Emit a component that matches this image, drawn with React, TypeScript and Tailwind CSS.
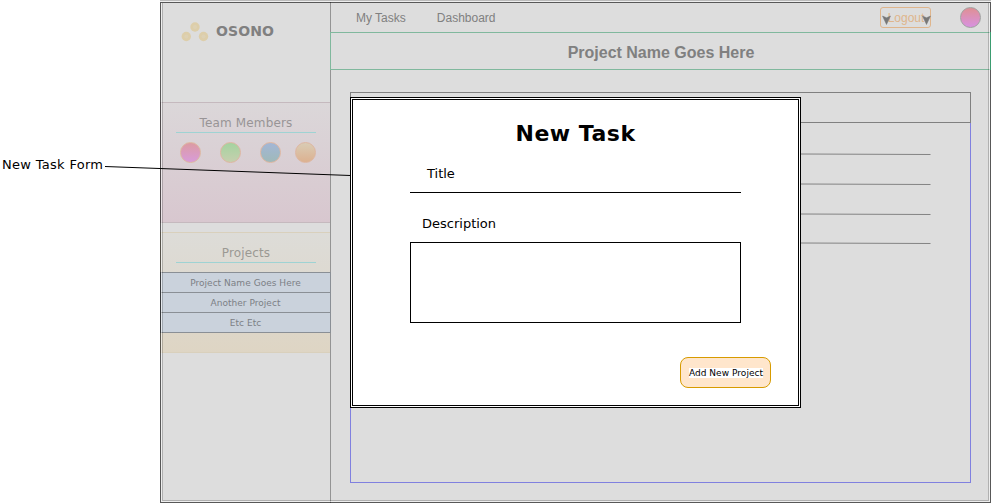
const verdana = "font-['DejaVu_Sans',sans-serif]";

const members = [
  { id: 'm1', fill: 'bg-linear-to-b from-[#dc9ba2] to-[#d89bd9]', gap: 'ml-[19px]' },
  { id: 'm2', fill: 'bg-linear-to-b from-[#a4d3a0] to-[#c6cfae]', gap: 'ml-[19px]' },
  { id: 'm3', fill: 'bg-linear-to-b from-[#a3b6d6] to-[#9fb9b9]', gap: 'ml-[19px]' },
  { id: 'm4', fill: 'bg-linear-to-b from-[#d9ccb5] to-[#dcb190]', gap: 'ml-[14px]' },
];

const projects = ['Project Name Goes Here', 'Another Project', 'Etc Etc'];

function Logo() {
  const dots = [
    [14, 5],
    [5.3, 14.5],
    [22.5, 14.5],
  ];
  return (
    <svg width="28" height="20" viewBox="0 0 28 20">
      {dots.map(([x, y]) => (
        <g key={x}>
          <circle cx={x} cy={y} r="4.7" fill="#ddceaa" />
          <circle cx={x} cy={y} r="2" fill="#ddd1b5" />
        </g>
      ))}
    </svg>
  );
}

function Sidebar() {
  return (
    <aside className={`flex h-[503px] w-[171px] shrink-0 flex-col border-r border-[#949494] pt-[3px] ${verdana}`}>
      <div className="flex h-[99px] items-start pl-[21px] pt-[19px]">
        <Logo />
        <span className="ml-[7px] text-[14px] leading-[18px] font-bold tracking-[0.1px] text-[#808080]">OSONO</span>
      </div>
      <section className="h-[121px] border-y border-l border-[#c5b9be] bg-linear-to-b from-[#dbd7d9] to-[#d8c7cf]">
        <h2 className="ml-[15px] mt-[12px] h-[18px] w-[140px] border-b border-[#9ed3d3] text-center text-[12px] leading-[17px] text-[#989496]">
          <span className="tracking-[0.15px]">Team Members</span>
        </h2>
        <div className="mt-[9px] flex">
          {members.map((m) => (
            <span key={m.id} className={`size-[21px] shrink-0 rounded-full border border-[#deb6a0] ${m.gap} ${m.fill}`} />
          ))}
        </div>
      </section>
      <section className="mt-[9px] h-[121px] border-y border-l border-[#d9d0bc] bg-linear-to-b from-[#dddcd8] to-[#ded5c4]">
        <h2 className="ml-[15px] mt-[12px] h-[18px] w-[140px] border-b border-[#9ed3d3] text-center text-[12px] leading-[17px] text-[#9b9993]">
          <span className="tracking-[0.15px]">Projects</span>
        </h2>
        <ul className="-mx-px mt-[9px] border-t border-[#8a8f95]">
          {projects.map((p) => (
            <li key={p} className="h-[20px] border-x border-b border-[#8a8f95] bg-[#cad2dc] text-center text-[9px] leading-[20px] tracking-[0.03px] text-[#7c8085]">
              {p}
            </li>
          ))}
        </ul>
      </section>
    </aside>
  );
}

function Nav() {
  return (
    <nav className="flex h-[33px] items-start border-b border-[#80b89d] pt-[7px] font-['Liberation_Sans',sans-serif] text-[12px] text-[#808080]">
      <a className="ml-[25px] mt-[3px] leading-[16px]">My Tasks</a>
      <a className="ml-[31px] mt-[3px] leading-[16px]">Dashboard</a>
      <div className="relative ml-auto h-[21px] w-[51px] rounded-[3px] border border-[#dfb58c] text-center leading-[20px] text-[#dfb58c]">
        <span className="ml-px">Logout</span>
        <svg className="absolute left-[1px] top-[7px]" width="50" height="11" viewBox="0 0 50 11">
          <path d="M0.5 1 L4.5 2.8 L8.5 1 L4.5 9.5 Z M40.5 1 L44.5 2.8 L48.5 1 L44.5 9.5 Z" fill="#777" stroke="#777" strokeWidth="0.5" />
        </svg>
      </div>
      <span className="ml-[29px] mr-[10px] size-[21px] rounded-full border border-[#a0a0a0] bg-linear-to-b from-[#df8f93] to-[#d891df]" />
    </nav>
  );
}

function TaskBoard() {
  return (
    <div className="ml-[19px] mt-[22px] w-[621px]">
      <div className="h-[31px] border border-[#808080]" />
      <div className="h-[360px] border border-t-0 border-[#8080df]">
        <svg width="619" height="140" viewBox="351 123 619 140" fill="none" stroke="#838383" strokeWidth="1">
          {[154.5, 184.5, 214.5, 243.5].map((y) => (
            <line key={y} x1="670" y1={y - 1} x2="930.5" y2={y} />
          ))}
        </svg>
      </div>
    </div>
  );
}

function NewTaskDialog() {
  return (
    <form className={`absolute left-[350px] top-[97px] flex h-[311px] w-[451px] flex-col border-3 border-double border-black bg-white px-[57px] text-black ${verdana}`}>
      <h2 className="mt-[20px] text-center text-[22px] leading-[28px] font-bold tracking-[0.5px]">New Task</h2>
      <div className="mt-[17px] h-[28px] w-[331px] border-b border-black pl-[17px] text-[13px] leading-[17px]">Title</div>
      <div className="mt-[22px] pl-[12px] text-[13px] leading-[17px]">Description</div>
      <div className="mt-[10px] h-[81px] w-[331px] shrink-0 border border-black" />
      <button type="button" className="-mr-[30px] mt-[34px] h-[31px] w-[91px] shrink-0 self-end rounded-[8px] border border-[#d79b00] bg-[#ffe6cc] text-[9px] leading-[10px]">
        <span className="ml-px bg-white whitespace-nowrap tracking-[0.04px]">Add New Project</span>
      </button>
    </form>
  );
}

export default function App() {
  return (
    <div className="relative flex h-[503px] w-[991px] overflow-hidden bg-white">
      <div className={`w-[160px] shrink-0 pl-[2px] pt-[156px] text-[13px] leading-[17px] text-black ${verdana}`}>
        <span className="tracking-[0.3px]">New Task Form</span>
      </div>
      <div className="relative flex h-[503px] w-[831px] bg-[#dddddd]">
        <Sidebar />
        <main className="h-[503px] w-[660px] pt-0">
          <Nav />
          <h1 className="h-[37px] border-b border-[#80b89d] pt-px text-center font-['Liberation_Sans',sans-serif] text-[16px] leading-[38px] font-bold text-[#808080]">
            Project Name Goes Here
          </h1>
          <TaskBoard />
        </main>
        <div className="pointer-events-none absolute inset-0 border-t border-[#bbbbbb]" />
        <div className="pointer-events-none absolute inset-x-0 top-px h-px bg-[#eeeeee]" />
        <div className="pointer-events-none absolute inset-x-0 bottom-0 top-[2px] border border-black/60" />
        <div className="pointer-events-none absolute bottom-px left-px right-px top-[3px] border border-t-0 border-white/50" />
        <div className="pointer-events-none absolute bottom-[2px] left-[2px] right-[2px] top-[3px] border border-t-0 border-black/20" />
        <div className="pointer-events-none absolute left-[170px] top-[32px] h-[38px] w-px bg-[#80b89d]" />
        <div className="pointer-events-none absolute right-0 top-[32px] h-[38px] w-px bg-[#3b9c70]" />
      </div>
      <NewTaskDialog />
      <svg className="pointer-events-none absolute left-0 top-0" width="351" height="200" viewBox="0 0 351 200">
        <line x1="105" y1="166.5" x2="350.5" y2="175.5" stroke="#000" />
      </svg>
    </div>
  );
}
